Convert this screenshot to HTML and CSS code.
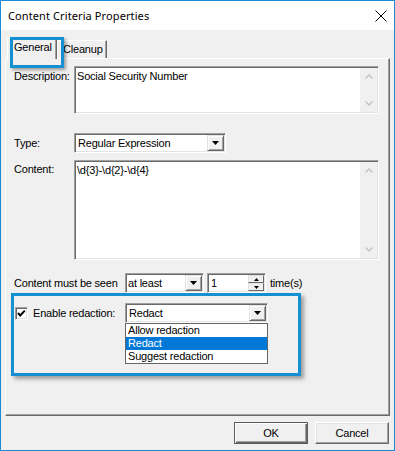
FILE: index.html
```html
<!DOCTYPE html>
<html>
<head>
<meta charset="utf-8">
<title>Content Criteria Properties</title>
<link rel="stylesheet" href="styles.css">
</head>
<body>
<div class="window">
  <div class="titlebar">
    <span class="title">Content Criteria Properties</span>
    <svg class="close" width="12" height="12" viewBox="0 0 12 12"><path d="M0.5 0.5 L11.5 11.5 M11.5 0.5 L0.5 11.5" stroke="#000" stroke-width="1" fill="none"/></svg>
  </div>
  <div class="client">
    <div class="tabs">
      <div class="tab active">General</div>
      <div class="tab">Cleanup</div>
    </div>
    <div class="panel">
      <div class="row row-field r-desc">
        <div class="lbl">Description:</div>
        <div class="textbox tb-desc">
          <div class="tb-text">Social Security Number</div>
          <div class="vscroll">
            <div class="sbtn"><svg width="8" height="5" viewBox="0 0 8 5"><polyline points="0.5,4.5 4,1 7.5,4.5" fill="none" stroke="#c2c2c2" stroke-width="1.3"/></svg></div>
            <div class="sbtn"><svg width="8" height="5" viewBox="0 0 8 5"><polyline points="0.5,0.5 4,4 7.5,0.5" fill="none" stroke="#c2c2c2" stroke-width="1.3"/></svg></div>
          </div>
        </div>
      </div>
      <div class="row row-combo r-type">
        <div class="lbl">Type:</div>
        <div class="combo cb-type">
          <div class="combo-text">Regular Expression</div>
          <div class="ddbtn"><svg width="7" height="4" viewBox="0 0 7 4"><polygon points="0,0 7,0 3.5,4" fill="#000"/></svg></div>
        </div>
      </div>
      <div class="row row-field r-content">
        <div class="lbl">Content:</div>
        <div class="textbox tb-content">
          <div class="tb-text">\d{3}-\d{2}-\d{4}</div>
          <div class="vscroll">
            <div class="sbtn"><svg width="8" height="5" viewBox="0 0 8 5"><polyline points="0.5,4.5 4,1 7.5,4.5" fill="none" stroke="#c2c2c2" stroke-width="1.3"/></svg></div>
            <div class="sbtn"><svg width="8" height="5" viewBox="0 0 8 5"><polyline points="0.5,0.5 4,4 7.5,0.5" fill="none" stroke="#c2c2c2" stroke-width="1.3"/></svg></div>
          </div>
        </div>
      </div>
      <div class="row row-combo r-seen">
        <div class="lbl lbl-wide">Content must be seen</div>
        <div class="combo cb-seen">
          <div class="combo-text">at least</div>
          <div class="ddbtn"><svg width="7" height="4" viewBox="0 0 7 4"><polygon points="0,0 7,0 3.5,4" fill="#000"/></svg></div>
        </div>
        <div class="combo spin">
          <div class="combo-text">1</div>
          <div class="spin-btns">
            <div class="spin-btn"><svg width="5" height="3" viewBox="0 0 5 3"><polygon points="0,3 5,3 2.5,0" fill="#000"/></svg></div>
            <div class="spin-btn"><svg width="5" height="3" viewBox="0 0 5 3"><polygon points="0,0 5,0 2.5,3" fill="#000"/></svg></div>
          </div>
        </div>
        <div class="unit">time(s)</div>
      </div>
      <div class="annot">
        <div class="row row-combo r-redact">
          <div class="checkbox"><svg width="11" height="11" viewBox="0 0 11 11"><polyline points="2,5 4.2,7.5 8.8,2.6" fill="none" stroke="#000" stroke-width="1.9"/></svg></div>
          <div class="lbl lbl-redact">Enable redaction:</div>
          <div class="combo cb-redact">
            <div class="combo-text">Redact</div>
            <div class="ddbtn"><svg width="7" height="4" viewBox="0 0 7 4"><polygon points="0,0 7,0 3.5,4" fill="#000"/></svg></div>
            <div class="ddlist">
              <div class="opt">Allow redaction</div>
              <div class="opt sel">Redact</div>
              <div class="opt">Suggest redaction</div>
            </div>
          </div>
        </div>
      </div>
    </div>
    <div class="buttons">
      <div class="btn default">OK</div>
      <div class="btn">Cancel</div>
    </div>
  </div>
</div>
</body>
</html>
```
FILE: styles.css
```css
* { box-sizing: border-box; }
html, body { margin: 0; padding: 0; }
body {
  width: 395px;
  height: 451px;
  overflow: hidden;
  background: #fff;
  font-family: "Liberation Sans", Arial, sans-serif;
  font-size: 11px;
  letter-spacing: -0.2px;
  color: #000;
}
.window {
  width: 395px;
  height: 451px;
  border: 1px solid #1a8cd6;
  display: flex;
  flex-direction: column;
}
.titlebar {
  height: 29px;
  flex: none;
  background: #fff;
  display: flex;
  align-items: center;
  justify-content: space-between;
  padding: 0 7px;
}
.title {
  font-family: "Noto Sans", sans-serif;
  font-size: 11px;
  letter-spacing: 0.1px;
}
.close { display: block; }
.client {
  flex: 1;
  background: #f0f0f0;
  display: flex;
  flex-direction: column;
  padding: 8px 4px 6px 4px;
}
.tabs {
  height: 20px;
  flex: none;
  display: flex;
  align-items: flex-end;
  padding-left: 2px;
  position: relative;
  z-index: 2;
}
.tab {
  width: 50px;
  height: 18px;
  padding: 2px 0 0 5px;
  line-height: 13px;
  border: 1px solid;
  border-bottom: none;
  border-color: #fff #696969 transparent #fff;
  box-shadow: inset -1px 0 0 #a0a0a0;
  background: #f0f0f0;
}
.tab.active {
  height: 21px;
  margin-bottom: -1px;
  padding-left: 6px;
  position: relative;
}
.tab.active::after {
  content: "";
  position: absolute;
  left: 2px;
  top: -2px;
  width: 48px;
  height: 25px;
  border: 3px solid #1590d2;
  box-shadow: 2px 2px 3px rgba(0, 0, 0, 0.35);
}
.panel {
  flex: 1;
  border: 1px solid;
  border-color: #fff #696969 #696969 #fff;
  box-shadow: inset -1px -1px 0 #a0a0a0;
  padding: 7px 0 0 8px;
}
.row { display: flex; }
.row-field { align-items: flex-start; }
.row-combo { align-items: baseline; }
.lbl { width: 60px; flex: none; line-height: 13px; }
.lbl-wide { width: 111px; }
.r-desc .lbl { padding-top: 4px; }
.r-content .lbl { padding-top: 3px; }
.r-type { margin-top: 19px; }
.r-content { margin-top: 7px; }
.r-seen { margin-top: 13px; }

.textbox {
  width: 305px;
  display: flex;
  padding: 1px;
  background: #fff;
  border: 1px solid;
  border-color: #a0a0a0 #fff #fff #a0a0a0;
  box-shadow: inset 1px 1px 0 #696969, inset -1px -1px 0 #e3e3e3;
}
.tb-desc { height: 48px; }
.tb-content { height: 100px; }
.tb-text {
  flex: 1;
  padding: 2px 0 0 1px;
  line-height: 13px;
}
.vscroll {
  width: 17px;
  flex: none;
  background: #f0f0f0;
  display: flex;
  flex-direction: column;
  justify-content: space-between;
}
.sbtn {
  height: 17px;
  display: flex;
  align-items: center;
  justify-content: center;
}
.sbtn svg { display: block; }

.combo {
  position: relative;
  height: 20px;
  flex: none;
  display: flex;
  padding: 1px;
  background: #fff;
  border: 1px solid;
  border-color: #a0a0a0 #fff #fff #a0a0a0;
  box-shadow: inset 1px 1px 0 #696969, inset -1px -1px 0 #e3e3e3;
}
.combo-text {
  flex: 1;
  line-height: 16px;
  padding-left: 2px;
  white-space: nowrap;
}
.cb-type { width: 152px; }
.cb-seen { width: 79px; }
.cb-seen .combo-text { padding-left: 1px; }
.cb-redact { width: 143px; }
.ddbtn {
  width: 17px;
  flex: none;
  background: #f0f0f0;
  border: 1px solid;
  border-color: #e3e3e3 #696969 #696969 #e3e3e3;
  box-shadow: inset 1px 1px 0 #fff, inset -1px -1px 0 #a0a0a0;
  display: flex;
  align-items: center;
  justify-content: center;
}
.ddbtn svg, .spin-btn svg { display: block; }
.spin { width: 59px; margin-left: 3px; }
.spin-btns {
  width: 16px;
  flex: none;
  display: flex;
  flex-direction: column;
}
.spin-btn {
  flex: 1;
  background: #f0f0f0;
  border: 1px solid;
  border-color: #e3e3e3 #696969 #696969 #e3e3e3;
  display: flex;
  align-items: center;
  justify-content: center;
}
.unit { margin-left: 4px; }

.annot {
  width: 290px;
  height: 83px;
  margin-left: -3px;
  border: 3px solid #1590d2;
  box-shadow: 3px 3px 4px rgba(0, 0, 0, 0.35);
  padding: 7px 0 0 1px;
}
.checkbox {
  width: 13px;
  height: 13px;
  flex: none;
  align-self: flex-start;
  margin-top: 4px;
  background: #fff;
  border: 1px solid;
  border-color: #a0a0a0 #fff #fff #a0a0a0;
  box-shadow: inset 1px 1px 0 #696969, inset -1px -1px 0 #e3e3e3;
}
.checkbox svg { display: block; }
.lbl-redact { width: 92px; margin-left: 5px; }
.ddlist {
  position: absolute;
  left: -1px;
  top: calc(100% + 1px);
  width: 143px;
  background: #fff;
  border: 1px solid #646464;
  z-index: 3;
}
.opt {
  height: 13px;
  line-height: 13px;
  padding-left: 2px;
  white-space: nowrap;
}
.opt.sel { background: #0078d7; color: #fff; }

.buttons {
  flex: none;
  display: flex;
  justify-content: flex-end;
  gap: 7px;
  margin-top: 6px;
  padding-right: 1px;
}
.btn {
  width: 74px;
  height: 22px;
  display: flex;
  align-items: center;
  justify-content: center;
  line-height: 13px;
  background: #f0f0f0;
  border: 1px solid;
  border-color: #fff #696969 #696969 #fff;
  box-shadow: inset -1px -1px 0 #a0a0a0, inset 1px 1px 0 #e3e3e3;
}
.btn.default {
  border-color: #5a5a5a;
  box-shadow: inset 1px 1px 0 #fff, inset -1px -1px 0 #696969, inset -2px -2px 0 #a0a0a0;
}
```
